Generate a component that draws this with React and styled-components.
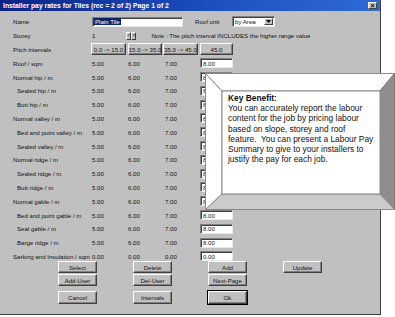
import React from "react";
import styled, { createGlobalStyle } from "styled-components";

const Global = createGlobalStyle`
  html, body { margin: 0; padding: 0; background: #ffffff; }
  body { font-family: "Liberation Sans", Arial, sans-serif; }
  * { box-sizing: border-box; }
`;

const Window = styled.div`
  position: relative;
  width: 381px;
  height: 315px;
  background: #c0c0c0;
  border-right: 1px solid #404040;
  border-bottom: 1px solid #404040;
  display: flex;
  flex-direction: column;
  color: #111;
  font-size: 6.1px;
`;

const TitleBar = styled.div`
  height: 11px;
  background: linear-gradient(90deg, #0a2484 0%, #1c4fc0 55%, #2f6ad6 100%);
  display: flex;
  align-items: center;
  justify-content: space-between;
  padding: 0 3px 0 3px;
`;

const Title = styled.span`
  color: #fff;
  font-weight: bold;
  font-size: 6.8px;
  white-space: nowrap;
`;

const CloseBtn = styled.div`
  width: 9px;
  height: 7px;
  background: #c0c0c0;
  border: 1px solid;
  border-color: #fff #404040 #404040 #fff;
  display: flex;
  align-items: center;
  justify-content: center;
  font-size: 7px;
  font-weight: bold;
  line-height: 1;
  color: #000;
`;

const Body = styled.div`
  padding: 4px 0 0 13px;
  display: flex;
  flex-direction: column;
`;

const Row = styled.div`
  display: grid;
  grid-template-columns: 79px 36px 37px 35px 1fr;
  height: 13.8px;
  align-items: center;
  white-space: nowrap;
`;

const Label = styled.span`
  padding-left: ${(p) => (p.$indent ? "4px" : "0")};
  white-space: nowrap;
  overflow: visible;
`;

const Span = styled.div`
  grid-column: 2 / -1;
  display: flex;
  align-items: center;
`;

const Sunken = styled.div`
  background: #fff;
  height: 10px;
  border: 1px solid;
  border-color: #808080 #e8e8e8 #e8e8e8 #808080;
  box-shadow: inset 1px 1px #404040;
  display: flex;
  align-items: center;
  padding-left: 2px;
  font-size: 6.1px;
  white-space: nowrap;
`;

const NameInput = styled(Sunken)`
  width: 91px;
  padding-left: 1px;
`;

const Selected = styled.span`
  background: #0a246a;
  color: #fff;
  padding: 0 1px;
  line-height: 7px;
`;

const RoofUnitLabel = styled.span`
  margin-left: 12px;
  width: 37px;
`;

const Select = styled(Sunken)`
  width: 43px;
  height: 11px;
  justify-content: space-between;
  padding-right: 1px;
`;

const SelectArrow = styled.div`
  width: 9px;
  height: 7px;
  background: #c0c0c0;
  border: 1px solid;
  border-color: #fff #404040 #404040 #fff;
  display: flex;
  align-items: center;
  justify-content: center;
`;

const ValueInput = styled(Sunken)`
  width: 33px;
`;

const SpinWrap = styled.div`
  margin-left: 31px;
  display: flex;
`;

const Spin = styled.div`
  width: 5px;
  height: 8px;
  background: #c0c0c0;
  border: 1px solid;
  border-color: #fff #404040 #404040 #fff;
  font-size: 5.5px;
  display: flex;
  align-items: center;
  justify-content: center;
  line-height: 1;
`;

const Note = styled.span`
  margin-left: 15px;
`;

const Btn = styled.div`
  height: ${(p) => p.$h || 12}px;
  width: ${(p) => p.$w || 39}px;
  margin-left: ${(p) => p.$ml || 0}px;
  background: #c0c0c0;
  border: 1px solid;
  border-color: #fff #404040 #404040 #fff;
  box-shadow: inset -1px -1px #808080${(p) => (p.$default ? ", 0 0 0 1px #000" : "")};
  display: flex;
  align-items: center;
  justify-content: center;
  font-size: 6.1px;
  white-space: nowrap;
`;

const ButtonGrid = styled.div`
  margin: -2px 0 0 45px;
  display: grid;
  grid-template-columns: repeat(4, 39px);
  grid-template-rows: 12px 12px 13px;
  column-gap: 36px;
  row-gap: 1px;
  & > .third { margin-top: 4px; }
`;

const GridBtn = styled(Btn)`
  grid-row: ${(p) => p.$row};
  grid-column: ${(p) => p.$col};
  margin-top: ${(p) => (p.$row === 3 ? "4px" : "0")};
`;

const Callout = styled.div`
  position: absolute;
  left: 205px;
  top: 73px;
  width: 190px;
  height: 137px;
  padding: 20px 8px 0 23px;
`;

const Frame = styled.svg`
  position: absolute;
  left: 0;
  top: 0;
`;

const CalloutText = styled.div`
  position: relative;
  font-size: 8.4px;
  line-height: 10.2px;
  color: #111;
  white-space: nowrap;
`;

const Bold = styled.div`
  font-weight: bold;
`;

const rows = [
  { label: "Roof / sqm" },
  { label: "Normal hip / m" },
  { label: "Sealed hip / m", indent: true },
  { label: "Butt hip / m", indent: true },
  { label: "Normal valley / m" },
  { label: "Bed and point valley / m", indent: true },
  { label: "Sealed valley / m", indent: true },
  { label: "Normal ridge / m" },
  { label: "Sealed ridge / m", indent: true },
  { label: "Butt ridge / m", indent: true },
  { label: "Normal gable / m" },
  { label: "Bed and point gable / m", indent: true },
  { label: "Seal gable / m", indent: true },
  { label: "Barge ridge / m", indent: true },
  { label: "Sarking and Insulation  / sqm", zero: true },
];

export default function App() {
  return (
    <>
      <Global />
      <Window>
        <TitleBar>
          <Title>Installer pay rates for Tiles (rec = 2 of 2) Page 1 of 2</Title>
          <CloseBtn>×</CloseBtn>
        </TitleBar>
        <Body>
          <Row>
            <Label>Name</Label>
            <Span>
              <NameInput>
                <Selected>Plain Tile</Selected>
              </NameInput>
              <RoofUnitLabel>Roof unit</RoofUnitLabel>
              <Select>
                <span>by Area</span>
                <SelectArrow>
                  <svg width="5" height="3" viewBox="0 0 5 3">
                    <polygon points="0,0 5,0 2.5,3" fill="#000" />
                  </svg>
                </SelectArrow>
              </Select>
            </Span>
          </Row>
          <Row>
            <Label>Storey</Label>
            <Span>
              <span>1</span>
              <SpinWrap>
                <Spin>&lt;</Spin>
                <Spin>&gt;</Spin>
              </SpinWrap>
              <Note>Note : The pitch interval INCLUDES the higher range value</Note>
            </Span>
          </Row>
          <Row>
            <Label>Pitch intervals</Label>
            <Span>
              <Btn $w={35} $ml={-1}>0.0 -&gt; 15.0</Btn>
              <Btn $w={34} $ml={2}>15.0 -&gt; 35.0</Btn>
              <Btn $w={35} $ml={1}>35.0 -&gt; 45.0</Btn>
              <Btn $w={33} $ml={2}>45.0</Btn>
            </Span>
          </Row>
          {rows.map((r) => (
            <Row key={r.label}>
              <Label $indent={r.indent}>{r.label}</Label>
              <span>{r.zero ? "0.00" : "5.00"}</span>
              <span>{r.zero ? "0.00" : "6.00"}</span>
              <span>{r.zero ? "0.00" : "7.00"}</span>
              <ValueInput>{r.zero ? "0.00" : "8.00"}</ValueInput>
            </Row>
          ))}
          <ButtonGrid>
            <GridBtn $row={1} $col={1}>Select</GridBtn>
            <GridBtn $row={1} $col={2}>Delete</GridBtn>
            <GridBtn $row={1} $col={3}>Add</GridBtn>
            <GridBtn $row={1} $col={4}>Update</GridBtn>
            <GridBtn $row={2} $col={1}>Add-User</GridBtn>
            <GridBtn $row={2} $col={2}>Del-User</GridBtn>
            <GridBtn $row={2} $col={3}>Next-Page</GridBtn>
            <GridBtn $row={3} $col={1} $h={13}>Cancel</GridBtn>
            <GridBtn $row={3} $col={2} $h={13}>Intervals</GridBtn>
            <GridBtn $row={3} $col={3} $h={13} $default>Ok</GridBtn>
          </ButtonGrid>
        </Body>
        <Callout>
          <Frame width="190" height="137" viewBox="0 0 190 137">
            <polygon points="0.5,0.5 189.5,0.5 175,18 17,18" fill="#ffffff" stroke="#8a8a8a" strokeWidth="1" />
            <polygon points="0.5,0.5 17,18 17,121 0.5,136.5" fill="#ffffff" stroke="#8a8a8a" strokeWidth="1" />
            <polygon points="189.5,0.5 189.5,136.5 175,121 175,18" fill="#8e8e8e" stroke="#7a7a7a" strokeWidth="1" />
            <polygon points="0.5,136.5 17,121 175,121 189.5,136.5" fill="#cbcbcb" stroke="#8a8a8a" strokeWidth="1" />
            <rect x="17" y="18" width="158" height="103" fill="#ffffff" stroke="#8a8a8a" strokeWidth="1" />
          </Frame>
          <CalloutText>
            <Bold>Key Benefit:</Bold>
            <div>You can accurately report the labour</div>
            <div>content for the job by pricing labour</div>
            <div>based on slope, storey and roof</div>
            <div>feature.&nbsp; You can present a Labour Pay</div>
            <div>Summary to give to your installers to</div>
            <div>justify the pay for each job.</div>
          </CalloutText>
        </Callout>
      </Window>
    </>
  );
}
